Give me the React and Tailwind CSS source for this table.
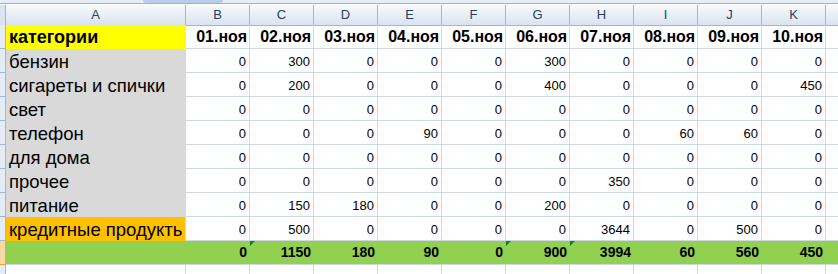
import React from 'react'

const days = ['01.ноя', '02.ноя', '03.ноя', '04.ноя', '05.ноя', '06.ноя', '07.ноя', '08.ноя', '09.ноя', '10.ноя']
const letters = ['B', 'C', 'D', 'E', 'F', 'G', 'H', 'I', 'J', 'K']

const rows = [
  { name: 'бензин', bg: 'bg-[#d9d9d9]', vals: [0, 300, 0, 0, 0, 300, 0, 0, 0, 0] },
  { name: 'сигареты и спички', bg: 'bg-[#d9d9d9]', vals: [0, 200, 0, 0, 0, 400, 0, 0, 0, 450] },
  { name: 'свет', bg: 'bg-[#d9d9d9]', vals: [0, 0, 0, 0, 0, 0, 0, 0, 0, 0] },
  { name: 'телефон', bg: 'bg-[#d9d9d9]', vals: [0, 0, 0, 90, 0, 0, 0, 60, 60, 0] },
  { name: 'для дома', bg: 'bg-[#d9d9d9]', vals: [0, 0, 0, 0, 0, 0, 0, 0, 0, 0] },
  { name: 'прочее', bg: 'bg-[#d9d9d9]', vals: [0, 0, 0, 0, 0, 0, 350, 0, 0, 0] },
  { name: 'питание', bg: 'bg-[#d9d9d9]', vals: [0, 150, 180, 0, 0, 200, 0, 0, 0, 0] },
  { name: 'кредитные продукть', bg: 'bg-[#ffc000]', vals: [0, 500, 0, 0, 0, 0, 3644, 0, 500, 0] },
]

const totals = [0, 1150, 180, 90, 0, 900, 3994, 60, 560, 450]
const flagged = [1, 5, 6]

const cols = 'grid grid-cols-[6px_180px_repeat(10,64px)_1fr]'

const RowHead = ({ active }) => (
  <div
    className={`border-r border-b ${
      active ? 'bg-[#f9d9a3] border-[#f2a13a]' : 'bg-[#e4ecf7] border-[#9eb6ce]'
    }`}
  />
)

const App = () => {
  return (
    <div className="w-[838px] h-[274px] overflow-hidden bg-white font-['Liberation_Sans',Arial,sans-serif] text-black">
      {/* formula bar edge */}
      <div className="relative h-[5px] bg-[#e6edf7] border-b border-b-white">
        <div className="absolute left-0 right-0 top-[3px] h-px bg-[#9fb1cb]" />
        <div className="absolute left-[143px] top-0 w-[80px] h-[3px] bg-[#b9cde9] rounded-b-[3px]" />
      </div>

      {/* column headers */}
      <div className={`${cols} h-[20px]`}>
        <div className="border-r border-b border-[#9eb6ce] bg-[#dbe4f1]" />
        <div className="border-r border-b border-[#9eb6ce] bg-gradient-to-b from-[#f7fafd] to-[#dae3f0] flex items-center justify-center text-[13px] text-[#27415f]">
          A
        </div>
        {letters.map((l) => (
          <div
            key={l}
            className="border-r border-b border-[#9eb6ce] bg-gradient-to-b from-[#f7fafd] to-[#dae3f0] flex items-center justify-center text-[13px] text-[#27415f]"
          >
            {l}
          </div>
        ))}
        <div className="border-b border-[#9eb6ce] bg-gradient-to-b from-[#f7fafd] to-[#dae3f0]" />
      </div>

      {/* title row */}
      <div className={`${cols} h-6`}>
        <RowHead />
        <div className="bg-[#ffff00] border-r border-b border-[#ffff00] flex items-end pl-[3px] pb-[2px] text-[18px] font-bold leading-none">
          категории
        </div>
        {days.map((d) => (
          <div
            key={d}
            className="border-r border-b border-[#d0d7e5] flex items-end justify-end pr-[2px] pb-[3px] text-[16px] font-bold leading-none"
          >
            {d}
          </div>
        ))}
        <div className="border-b border-[#d0d7e5]" />
      </div>

      {/* data rows */}
      {rows.map((r) => (
        <div key={r.name} className={`${cols} h-6`}>
          <RowHead />
          <div className={`${r.bg} border-r border-[#d0d7e5] flex items-end pl-[3px] pb-[2px] text-[18.5px] leading-none whitespace-nowrap`}>
            {r.name}
          </div>
          {r.vals.map((v, i) => (
            <div
              key={i}
              className="border-r border-b border-[#d0d7e5] flex items-end justify-end pr-[3px] pb-[4px] text-[13px] leading-none"
            >
              {v}
            </div>
          ))}
          <div className="border-b border-[#d0d7e5]" />
        </div>
      ))}

      {/* totals row */}
      <div className={`${cols} h-6`}>
        <RowHead active />
        <div className="bg-[#92d050] border-b border-[#d0d7e5]" />
        {totals.map((t, i) => (
          <div
            key={i}
            className="relative bg-[#92d050] border-b border-[#d0d7e5] flex items-start justify-end pr-[3px] pt-[4px] text-[14px] font-bold leading-none"
          >
            {flagged.includes(i) && (
              <span className="absolute left-0 top-0 w-0 h-0 border-t-[5px] border-r-[5px] border-t-[#1a7f1a] border-r-transparent" />
            )}
            {t}
          </div>
        ))}
        <div className="bg-[#92d050] border-b border-[#d0d7e5]" />
      </div>

      {/* empty row */}
      <div className={`${cols} h-6`}>
        <RowHead />
        <div className="border-r border-b border-[#d0d7e5]" />
        {letters.map((l) => (
          <div key={l} className="border-r border-b border-[#d0d7e5]" />
        ))}
        <div className="border-b border-[#d0d7e5]" />
      </div>
    </div>
  )
}

export default App
